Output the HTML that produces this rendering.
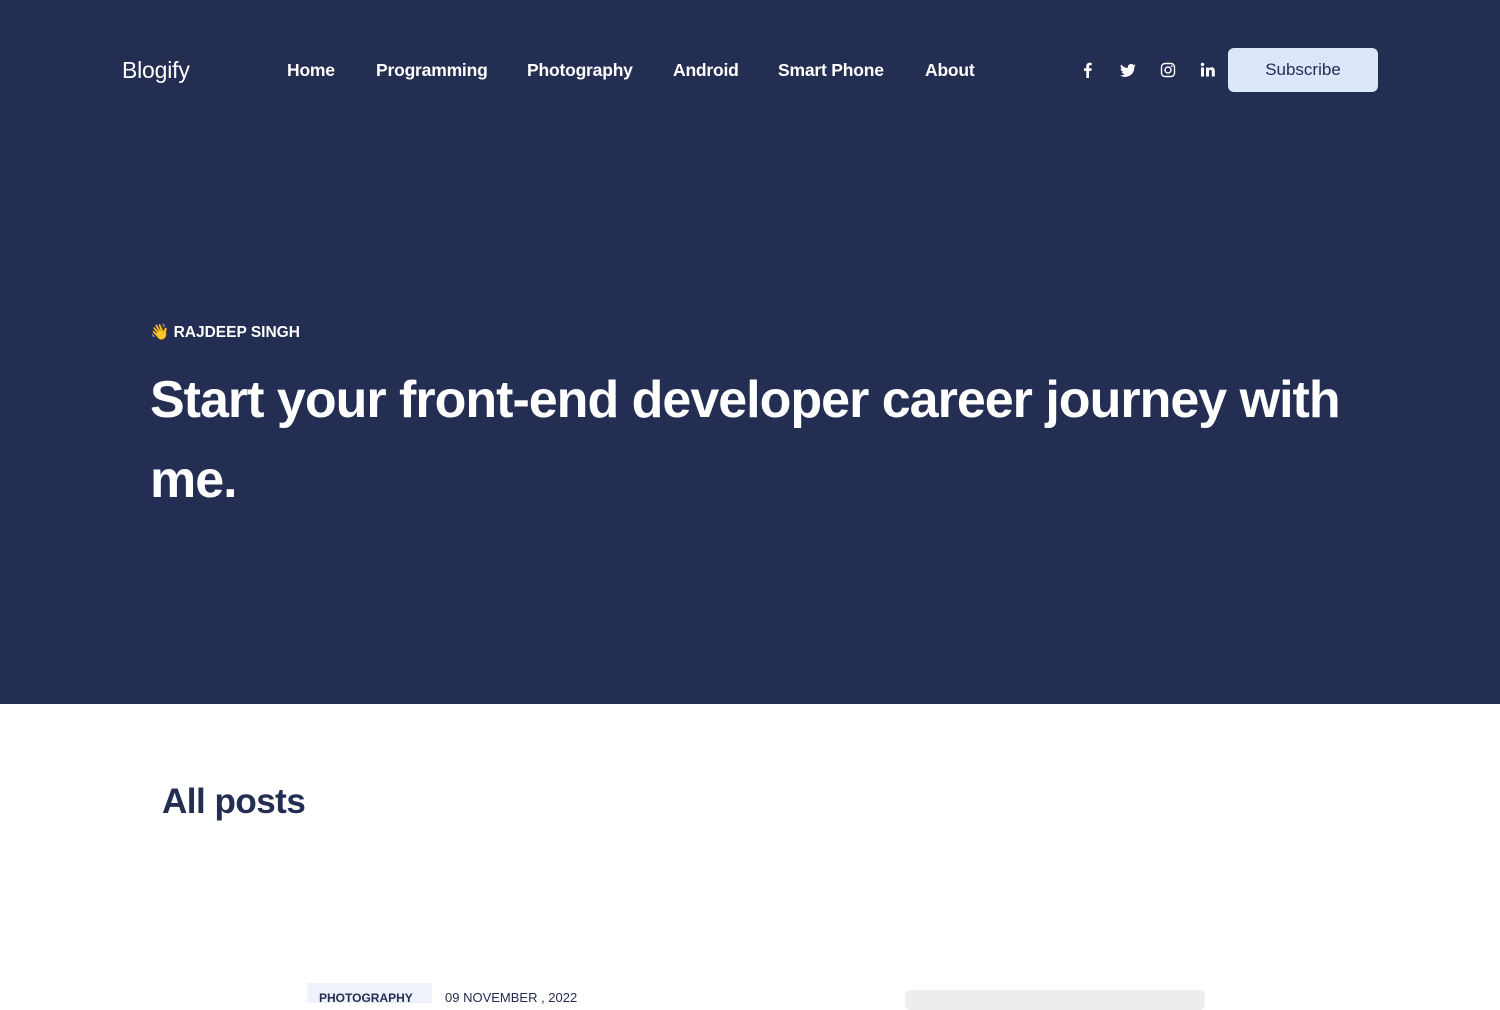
<!DOCTYPE html>
<html><head><meta charset="utf-8"><style>
*{margin:0;padding:0;box-sizing:border-box}
body{width:1500px;height:1000px;overflow:hidden;background:#fff;font-family:"Liberation Sans",sans-serif}
.hero{position:absolute;left:0;top:0;width:1500px;height:704px;background:#242d52;color:#fff}
.logo{position:absolute;left:122px;top:57px;font-size:23px;letter-spacing:-0.2px}
.nav a{position:absolute;top:60px;font-size:17.5px;font-weight:bold;color:#fff;text-decoration:none;letter-spacing:-0.2px}
.ic{position:absolute;top:62px;width:16px;height:16px}
.sub{position:absolute;left:1228px;top:48px;width:150px;height:44px;background:#dbe6fb;border-radius:6px;color:#242d52;font-size:17px;text-align:center;line-height:44px}
.tag{position:absolute;left:150px;top:323px;font-size:15.5px;font-weight:bold}
h1{position:absolute;left:150px;top:360px;width:1260px;font-size:52px;line-height:80px;font-weight:bold;letter-spacing:-1px}
h2{position:absolute;left:162px;top:782px;font-size:35px;color:#242d52;letter-spacing:-0.5px}
.cat{position:absolute;left:307px;top:983px;width:125px;height:20px;background:#eef2fb;font-size:12px;font-weight:bold;color:#242d52;padding:8px 0 0 12px}
.date{position:absolute;left:445px;top:990px;font-size:13px;color:#242d52}
.img{position:absolute;left:905px;top:990px;width:300px;height:20px;background:#eceeec;border-radius:6px}
</style></head><body>
<div class="hero">
<div class="logo">Blogify</div>
<div class="nav">
<a style="left:287px">Home</a><a style="left:376px">Programming</a><a style="left:527px">Photography</a><a style="left:673px">Android</a><a style="left:778px">Smart Phone</a><a style="left:925px">About</a>
</div>
<svg class="ic" style="left:1080px" viewBox="0 0 16 16"><path d="M9 16V9h2.3l.4-2.7H9V4.6c0-.8.3-1.3 1.3-1.3h1.4V.9C11.4.8 10.6.7 9.7.7 7.7.7 6.3 1.9 6.3 4.2v2.1H4V9h2.3v7z" fill="#fff"/></svg>
<svg class="ic" style="left:1120px" viewBox="0 0 16 16"><path d="M16 3.5a6.6 6.6 0 0 1-1.9.5 3.3 3.3 0 0 0 1.4-1.8 6.6 6.6 0 0 1-2 .8A3.3 3.3 0 0 0 7.9 6 9.3 9.3 0 0 1 1.1 2.5a3.3 3.3 0 0 0 1 4.4 3.3 3.3 0 0 1-1.5-.4 3.3 3.3 0 0 0 2.6 3.2 3.3 3.3 0 0 1-1.5.1 3.3 3.3 0 0 0 3.1 2.3A6.6 6.6 0 0 1 0 13.4 9.3 9.3 0 0 0 14.3 5.1V4.7A6.7 6.7 0 0 0 16 3.5z" fill="#fff"/></svg>
<svg class="ic" style="left:1160px" viewBox="0 0 16 16"><rect x="1.5" y="1.5" width="13" height="13" rx="3.5" fill="none" stroke="#fff" stroke-width="1.4"/><circle cx="8" cy="8" r="3" fill="none" stroke="#fff" stroke-width="1.4"/><circle cx="11.8" cy="4.2" r=".9" fill="#fff"/></svg>
<svg class="ic" style="left:1200px" viewBox="0 0 16 16"><rect x="1" y="5.5" width="3" height="9" fill="#fff"/><circle cx="2.5" cy="2.5" r="1.7" fill="#fff"/><path d="M6 5.5h2.8v1.3c.5-.9 1.5-1.5 2.8-1.5 2.300 0 3.2 1.4 3.2 3.8v5.4h-3V9.6c0-1.1-.3-1.8-1.3-1.8S9 8.6 9 9.6v4.9H6z" fill="#fff"/></svg>
<div class="sub">Subscribe</div>
<div class="tag">👋 RAJDEEP SINGH</div>
<h1>Start your front-end developer career journey with me.</h1>
</div>
<h2>All posts</h2>
<div class="cat">PHOTOGRAPHY</div>
<div class="date">09 NOVEMBER , 2022</div>
<div class="img"></div>
</body></html>
